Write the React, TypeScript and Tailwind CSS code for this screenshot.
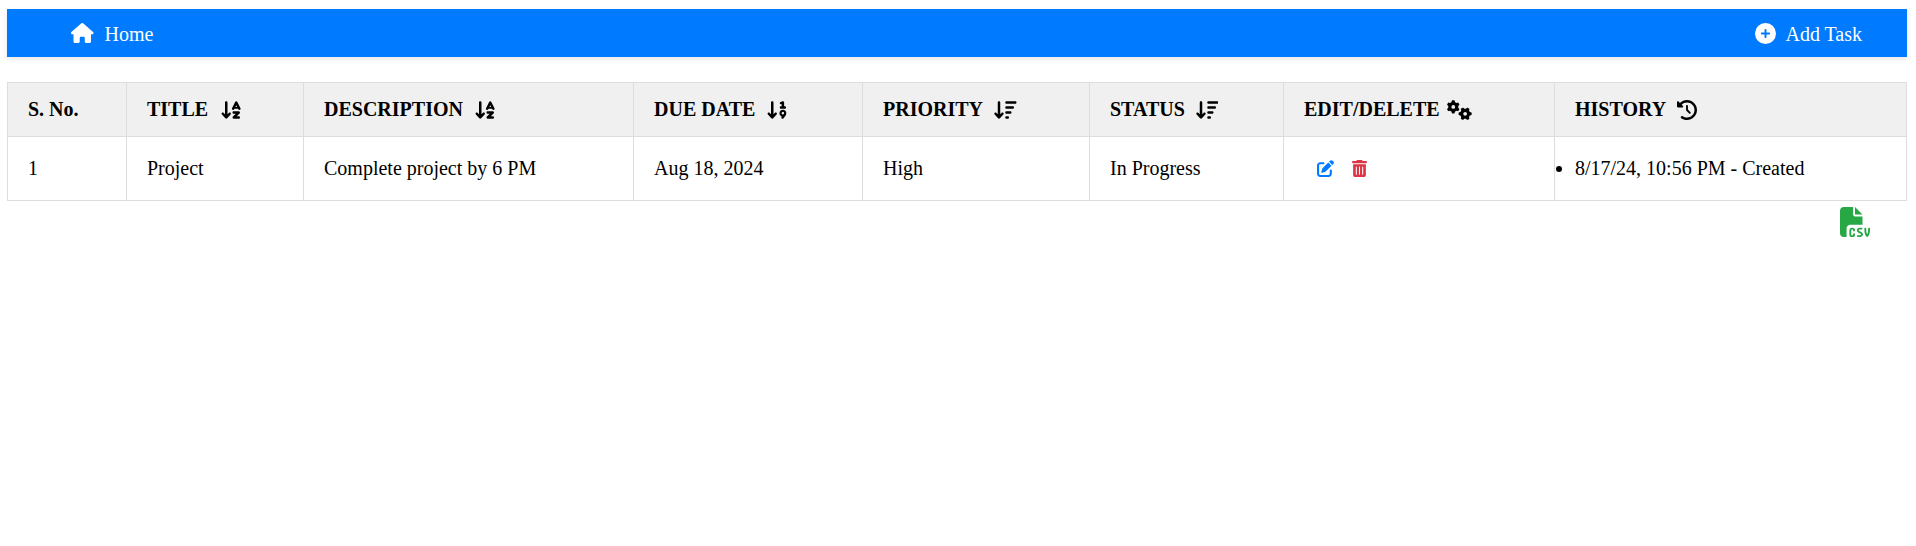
import type { ReactNode } from "react";
import {
  FaArrowDown19,
  FaArrowDownAZ,
  FaArrowDownWideShort,
  FaCirclePlus,
  FaClockRotateLeft,
  FaFileCsv,
  FaGears,
  FaHouse,
  FaPenToSquare,
  FaTrashCan,
} from "react-icons/fa6";

const sortIcon = "h-5 w-[22.5px] shrink-0";

const columns: { label: string; width: string; gap: string; icon?: ReactNode }[] = [
  { label: "S. No.", width: "w-[119px]", gap: "" },
  { label: "TITLE", width: "w-[177px]", gap: "gap-[12px]", icon: <FaArrowDownAZ className={sortIcon} /> },
  { label: "DESCRIPTION", width: "w-[330px]", gap: "gap-[11px]", icon: <FaArrowDownAZ className={sortIcon} /> },
  { label: "DUE DATE", width: "w-[229px]", gap: "gap-[11px]", icon: <FaArrowDown19 className={sortIcon} /> },
  { label: "PRIORITY", width: "w-[227px]", gap: "gap-[11px]", icon: <FaArrowDownWideShort className={sortIcon} /> },
  { label: "STATUS", width: "w-[194px]", gap: "gap-[11px]", icon: <FaArrowDownWideShort className={sortIcon} /> },
  { label: "EDIT/DELETE", width: "w-[271px]", gap: "gap-[7px]", icon: <FaGears className="h-5 w-[25px] shrink-0" /> },
  { label: "HISTORY", width: "w-[352px]", gap: "gap-[11px]", icon: <FaClockRotateLeft className="size-5 shrink-0" /> },
];

const task = ["1", "Project", "Complete project by 6 PM", "Aug 18, 2024", "High", "In Progress"];

const cell = "border-r border-b border-[#dddddd] pl-5 py-0";

export default function App() {
  return (
    <div className="min-h-[546px] bg-white pl-[7px] pr-[9px] pt-[9px] font-['Liberation_Serif','Times_New_Roman',serif] text-[20px] leading-[23px] text-black">
      <nav className="flex h-[48px] items-center justify-between bg-[#007bff] pl-[64px] pr-[45px] text-white shadow-[0_2px_5px_rgba(0,0,0,0.1)]">
        <a className="flex items-center gap-[11px]">
          <FaHouse className="h-5 w-[22.5px]" />
          <span className="pt-0.5">Home</span>
        </a>
        <a className="flex items-center gap-[9px]">
          <FaCirclePlus className="size-[21px]" />
          <span className="pt-0.5">Add Task</span>
        </a>
      </nav>

      <table className="mt-[25px] w-[1900px] table-fixed border-separate border-spacing-0 border-t border-l border-[#dddddd] text-left">
        <thead>
          <tr className="h-[54px] bg-[#f0f0f0]">
            {columns.map((column) => (
              <th key={column.label} className={`${cell} ${column.width} font-bold`}>
                <div className={`flex items-center whitespace-nowrap ${column.gap}`}>
                  <span>{column.label}</span>
                  {column.icon}
                </div>
              </th>
            ))}
          </tr>
        </thead>
        <tbody>
          <tr className="h-[64px]">
            {task.map((value) => (
              <td key={value} className={cell}>
                {value}
              </td>
            ))}
            <td className={cell}>
              <div className="flex items-center gap-[17px] pl-[13px] text-[17px]">
                <FaPenToSquare className="text-[#007bff]" />
                <FaTrashCan className="text-[#dc3545]" />
              </div>
            </td>
            <td className={cell}>
              <ul className="list-outside list-disc">
                <li>8/17/24, 10:56 PM - Created</li>
              </ul>
            </td>
          </tr>
        </tbody>
      </table>

      <div className="flex justify-end pr-[37px] pt-[6px]">
        <FaFileCsv className="size-[30px] text-[#28a745]" />
      </div>
    </div>
  );
}
